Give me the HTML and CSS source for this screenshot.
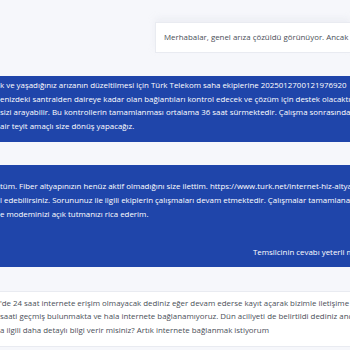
FILE: index.html
```html
<!DOCTYPE html>
<html lang="tr">
<head>
    <meta charset="UTF-8">
    <title>Destek</title>
    <link rel="stylesheet" href="styles.css">
</head>
<body>
    <div class="chat">
        <div class="msg-user msg-short">
            <div class="bubble">Merhabalar, genel arıza çözüldü görünüyor. Ancak bu durumun tekrar yaşanmaması için</div>
        </div>

        <div class="msg-agent">
            <div class="line">k ve yaşadığınız arızanın düzeltilmesi için Türk Telekom saha ekiplerine 2025012700121976920</div>
            <div class="line">enizdeki santralden daireye kadar olan bağlantıları kontrol edecek ve çözüm için destek olacaktır.</div>
            <div class="line"> sizi arayabilir. Bu kontrollerin tamamlanması ortalama 36 saat sürmektedir. Çalışma sonrasında</div>
            <div class="line">air teyit amaçlı size dönüş yapacağız.</div>
        </div>

        <div class="msg-agent msg-tall">
            <div class="line">tüm. Fiber altyapınızın henüz aktif olmadığını size ilettim. https://www.turk.net/internet-hiz-altyapi-sorgulama</div>
            <div class="line">l edebilirsiniz. Sorununuz ile ilgili ekiplerin çalışmaları devam etmektedir. Çalışmalar tamamlanana kadar</div>
            <div class="line">e modeminizi açık tutmanızı rica ederim.</div>
            <div class="feedback">Temsilcinin cevabı yeterli mi?</div>
        </div>

        <div class="msg-user msg-wide">
            <div class="line">'de 24 saat internete erişim olmayacak dediniz eğer devam ederse kayıt açarak bizimle iletişime geçin dediniz</div>
            <div class="line">saati geçmiş bulunmakta ve hala internete bağlanamıyoruz. Dün aciliyeti de belirtildi dediniz ancak</div>
            <div class="line">a ilgili daha detaylı bilgi verir misiniz? Artık internete bağlanmak istiyorum</div>
        </div>
    </div>
</body>
</html>
```

FILE: styles.css
```css
body {
    margin: 0;
    background: #f6f7fb;
    font-family: "Open Sans", Arial, sans-serif;
    font-size: 7.9px;
    line-height: 13.6px;
}

.chat {
    width: 350px;
    height: 350px;
    overflow: hidden;
}

.line {
    white-space: nowrap;
}

.msg-short {
    margin: 22px 0 0 155px;
}

.msg-short .bubble {
    white-space: nowrap;
    background: #ffffff;
    border: 1px solid #e9ebf1;
    border-right: none;
    height: 29px;
    line-height: 29px;
    padding-left: 8px;
    color: #4a4f58;
    box-shadow: 0 -4px 6px rgba(220, 224, 232, 0.35);
}

.msg-agent {
    margin-top: 23px;
    background: #1f45aa;
    color: #ffffff;
    padding: 3px 0 9px 0;
}

.msg-tall {
    padding: 15px 0 7px 0;
}

.feedback {
    white-space: nowrap;
    margin: 25px 0 0 253px;
}

.msg-wide {
    margin-top: 24px;
    background: #ffffff;
    border-top: 1px solid #e9ebf1;
    border-bottom: 1px solid #e9ebf1;
    color: #4a4f58;
    padding: 5px 0 8px 0;
}
```
